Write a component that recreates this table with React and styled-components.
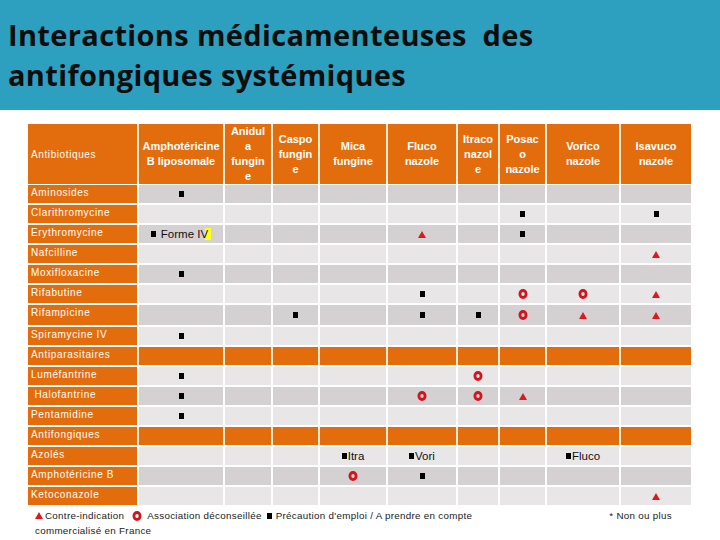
import React from "react";
import styled, { createGlobalStyle } from "styled-components";

const Global = createGlobalStyle`
  html, body { margin: 0; padding: 0; background: #ffffff; }
  body { font-family: "Liberation Sans", Arial, sans-serif; }
`;

const COLS = "109px 84px 46px 45px 66px 68px 40px 45px 72px 70px";
const ORANGE = "#e36d0c";
const TONES = { dark: "#d5d0d1", light: "#e9e6e7", section: ORANGE };

const Page = styled.div`
  width: 720px;
  height: 540px;
  overflow: hidden;
  display: flex;
  flex-direction: column;
`;

const Banner = styled.header`
  height: 110px;
  background: #2ca0be;
  padding: 15px 0 0 8px;
  box-sizing: border-box;
`;

const Title = styled.h1`
  margin: 0;
  font-family: "Open Sans", "Noto Sans", sans-serif;
  font-weight: 700;
  font-size: 29px;
  line-height: 40px;
  letter-spacing: 0.35px;
  color: #0d0d0d;
  white-space: pre;
`;

const Table = styled.div`
  margin: 14px 0 0 28px;
  width: 663px;
  display: flex;
  flex-direction: column;
  gap: 2px;
`;

const Row = styled.div`
  display: grid;
  grid-template-columns: ${COLS};
  column-gap: 2px;
  height: ${(p) => p.$h || 18}px;
  background: ${(p) => (p.$section ? "#fbecd2" : "#ffffff")};
`;

const HeadRow = styled(Row)`
  height: 57px;
  margin-bottom: 2px;
  background: #fbecd2;
`;

const HeadCell = styled.div`
  background: ${ORANGE};
  color: #ffffff;
  font-weight: bold;
  font-size: 11px;
  line-height: 15px;
  text-align: center;
  display: flex;
  align-items: center;
  justify-content: center;
  overflow: visible;
`;

const HeadLabel = styled.div`
  background: ${ORANGE};
  color: #ffffff;
  font-size: 10px;
  letter-spacing: 0.6px;
  display: flex;
  align-items: center;
  padding-left: 3px;
`;

const Label = styled.div`
  background: ${ORANGE};
  color: #ffffff;
  font-size: 10px;
  letter-spacing: 0.65px;
  line-height: 14px;
  padding: 1px 3px 0;
  white-space: pre;
  overflow: hidden;
`;

const Cell = styled.div`
  background: ${(p) => TONES[p.$tone]};
  display: flex;
  align-items: center;
  justify-content: center;
  font-size: 11.5px;
  color: #111111;
  white-space: nowrap;
`;

const Sq = styled.span`
  display: inline-block;
  width: 5px;
  height: 6px;
  background: #000000;
  margin-right: ${(p) => p.$gap || 0}px;
`;

const Hl = styled.span`
  display: inline-block;
  padding-right: 3px;
  background: linear-gradient(to right, transparent 45%, #ffff1a 45%);
`;

const Tri = ({ size = 8 }) => (
  <svg width={size} height={size - 1} viewBox="0 0 8 7">
    <polygon points="4,0 8,7 0,7" fill="#db1a1f" />
  </svg>
);

const Ring = () => (
  <svg width="10" height="10" viewBox="0 0 10 10">
    <ellipse cx="5" cy="5" rx="3.1" ry="3.5" fill="none" stroke="#d3141c" strokeWidth="2.8" />
  </svg>
);

const Legend = styled.div`
  margin: 3px 0 0 35px;
  width: 637px;
  font-size: 9.8px;
  letter-spacing: 0.3px;
  color: #222222;
  line-height: 15px;
`;

const LegendLine = styled.div`
  display: flex;
  justify-content: space-between;
  align-items: center;
`;

const LegendItems = styled.span`
  display: inline-flex;
  align-items: center;
  gap: 2px;
`;

const Gap = styled.span`
  display: inline-block;
  width: ${(p) => p.$w}px;
`;

const headers = [
  ["Amphotéricine", "B liposomale"],
  ["Anidul", "a", "fungin", "e"],
  ["Caspo", "fungin", "e"],
  ["Mica", "fungine"],
  ["Fluco", "nazole"],
  ["Itraco", "nazol", "e"],
  ["Posac", "o", "nazole"],
  ["Vorico", "nazole"],
  ["Isavuco", "nazole"],
];

const rows = [
  { label: "Aminosides", tone: "dark", cells: { 0: "s" } },
  { label: "Clarithromycine", tone: "light", cells: { 6: "s", 8: "s" } },
  { label: "Erythromycine", tone: "dark", cells: { 0: "forme", 4: "t", 6: "s" } },
  { label: "Nafcilline", tone: "light", cells: { 8: "t" } },
  { label: "Moxifloxacine", tone: "dark", cells: { 0: "s" } },
  { label: "Rifabutine", tone: "light", cells: { 4: "s", 6: "o", 7: "o", 8: "t" } },
  { label: "Rifampicine", tone: "dark", h: 20, cells: { 2: "s", 4: "s", 5: "s", 6: "o", 7: "t", 8: "t" } },
  { label: "Spiramycine IV", tone: "light", cells: { 0: "s" } },
  { label: "Antiparasitaires", tone: "section", cells: {} },
  { label: "Luméfantrine", tone: "light", cells: { 0: "s", 5: "o" } },
  { label: " Halofantrine", tone: "dark", cells: { 0: "s", 4: "o", 5: "o", 6: "t" } },
  { label: "Pentamidine", tone: "light", cells: { 0: "s" } },
  { label: "Antifongiques", tone: "section", cells: {} },
  { label: "Azolés", tone: "light", cells: { 3: "Itra", 4: "Vori", 7: "Fluco" } },
  { label: "Amphotéricine B", tone: "dark", cells: { 3: "o", 4: "s" } },
  { label: "Ketoconazole", tone: "light", cells: { 8: "t" } },
];

function Mark({ v }) {
  if (!v) return null;
  if (v === "s") return <Sq />;
  if (v === "t") return <Tri />;
  if (v === "o") return <Ring />;
  if (v === "forme")
    return (
      <>
        <Sq $gap={5} />
        Forme I<Hl>V</Hl>
      </>
    );
  return (
    <>
      <Sq $gap={1} />
      {v}
    </>
  );
}

export default function App() {
  return (
    <Page>
      <Global />
      <Banner>
        <Title>{"Interactions médicamenteuses  des\nantifongiques systémiques"}</Title>
      </Banner>
      <Table>
        <HeadRow>
          <HeadLabel>Antibiotiques</HeadLabel>
          {headers.map((lines, i) => (
            <HeadCell key={i}>
              <div>
                {lines.map((l, j) => (
                  <div key={j}>{l}</div>
                ))}
              </div>
            </HeadCell>
          ))}
        </HeadRow>
        {rows.map((r) => (
          <Row key={r.label} $h={r.h} $section={r.tone === "section"}>
            <Label>{r.label}</Label>
            {headers.map((_, i) => (
              <Cell key={i} $tone={r.tone}>
                <Mark v={r.cells[i]} />
              </Cell>
            ))}
          </Row>
        ))}
      </Table>
      <Legend>
        <LegendLine>
          <LegendItems>
            <Tri />
            Contre-indication
            <Gap $w={4} />
            <Ring />
            <Gap $w={1} />
            Association déconseillée
            <Gap $w={1} />
            <Sq $gap={2} />
            Précaution d'emploi / A prendre en compte
          </LegendItems>
          <span>* Non ou plus</span>
        </LegendLine>
        <div>commercialisé en France</div>
      </Legend>
    </Page>
  );
}
